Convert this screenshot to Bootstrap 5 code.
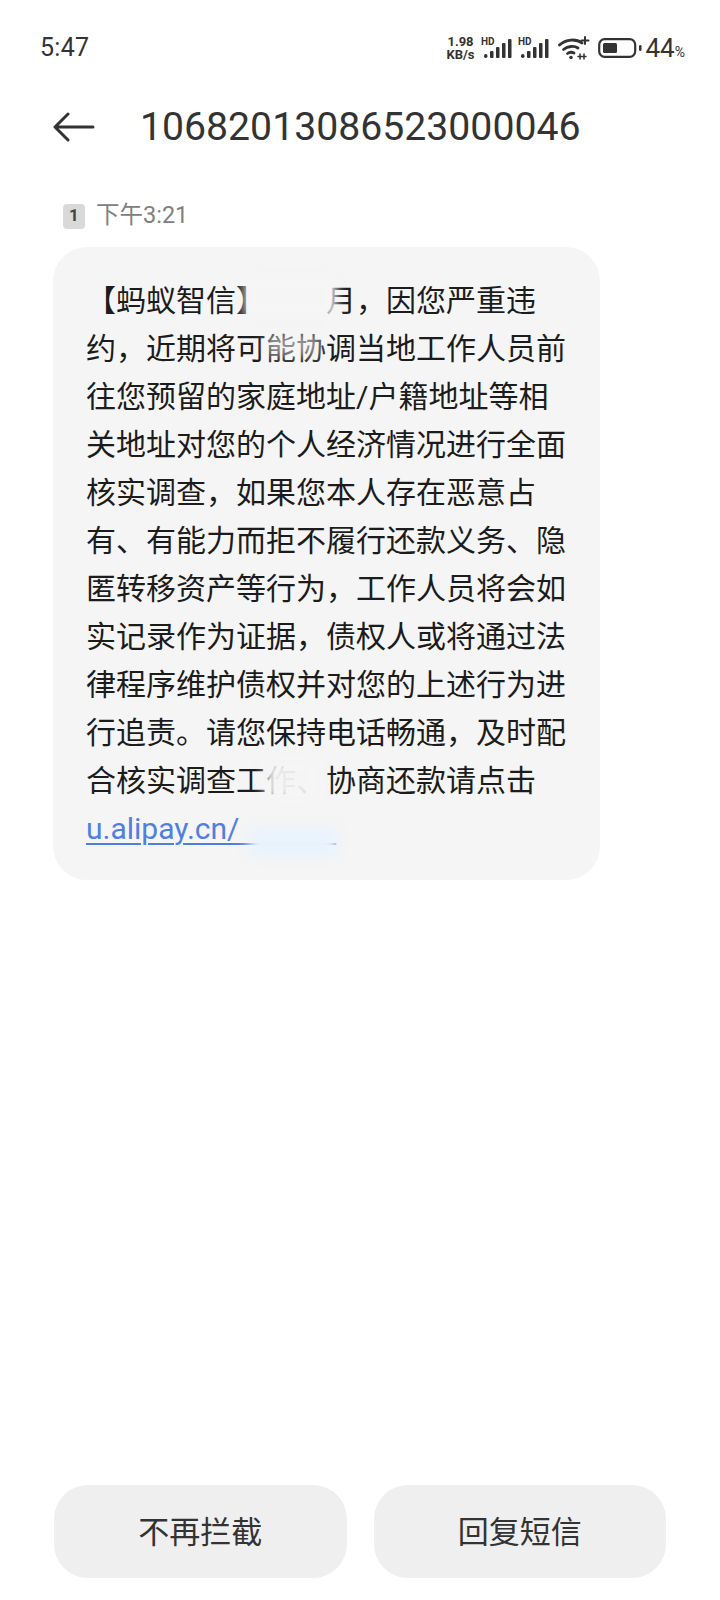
<!DOCTYPE html>
<html lang="zh-CN">
<head>
    <meta charset="UTF-8">
    <meta name="viewport" content="width=device-width, initial-scale=1.0">
    <title>短信</title>
    <link href="https://cdn.jsdelivr.net/npm/bootstrap@5.3.2/dist/css/bootstrap.min.css" rel="stylesheet">
    <style>
        body {
            background-color: #fff;
            font-family: Roboto, "Noto Sans CJK SC", sans-serif;
            color: #222;
        }
        .screen {
            width: 720px;
            height: 1600px;
            overflow: hidden;
        }
        .status-row {
            height: 96px;
            padding: 0 35px 0 40px;
            color: #333;
        }
        .clock {
            font-size: 25px;
            letter-spacing: .3px;
        }
        .speed {
            font-size: 13px;
            line-height: 13px;
            font-weight: 700;
            text-align: center;
            width: 34px;
            margin-right: 2px;
        }
        .pct {
            font-size: 26px;
            margin-left: 4px;
        }
        .pct-sign {
            font-size: 14px;
        }
        .title-row {
            height: 62px;
            padding-left: 53px;
        }
        .title-num {
            font-size: 39.2px;
            color: #333;
            margin-left: 45px;
        }
        .stamp-row {
            margin: 42px 0 0 63px;
            height: 32px;
            color: #808080;
            font-size: 23.5px;
        }
        .sim-tag {
            width: 22px;
            height: 25px;
            border-radius: 4px;
            background: #d9d9d9;
            color: #444;
            font-size: 17px;
            font-weight: 700;
            margin-right: 11px;
        }
        .bubble {
            position: relative;
            width: 547px;
            height: 633px;
            margin: 15px 0 0 53px;
            padding: 30px 32px 0 33px;
            background: #f5f5f5;
            border-radius: 34px;
            font-size: 30px;
            line-height: 48px;
            color: #1c1c1c;
        }
        .bubble a {
            color: #4f80e0;
            display: block;
            text-decoration: underline;
            text-underline-offset: 4px;
            text-decoration-thickness: 2px;
        }
        .redacted-gap {
            display: inline-block;
            width: 60px;
        }
        .smudge {
            position: absolute;
            background: #f5f5f5;
            filter: blur(6px);
        }
        .smudge-blue {
            background: #e9f3fd;
        }
        .action-row {
            margin-top: auto;
            padding: 0 54px 22px;
            gap: 27px;
        }
        .action-btn {
            flex: 1 1 0;
            height: 93px;
            padding-top: 10px;
            border: 0;
            border-radius: 34px;
            background: #efefef;
            color: #333;
            font-size: 31px;
        }
        .action-btn:hover, .action-btn:active {
            background: #efefef !important;
            color: #333 !important;
        }
    </style>
</head>
<body>
    <div class="screen d-flex flex-column">
        <div class="status-row d-flex align-items-center justify-content-between">
            <span class="clock">5:47</span>
            <div class="d-flex align-items-center">
                <div class="speed">1.98<br>KB/s</div>
                <svg width="33" height="24" viewBox="0 0 33 24" fill="#333">
                    <rect x="4" y="18" width="3.500" height="4" rx="1.700"/><rect x="10" y="15" width="3.500" height="7" rx="1"/><rect x="16" y="11" width="3.500" height="11" rx="1"/><rect x="22" y="7" width="3.500" height="15" rx="1"/><rect x="28" y="3" width="3.500" height="19" rx="1"/>
                    <text x="1" y="9" font-size="10" font-weight="700" font-family="Roboto">HD</text>
                </svg>
                <svg class="ms-1" width="33" height="24" viewBox="0 0 33 24" fill="#333">
                    <rect x="4" y="18" width="3.500" height="4" rx="1.700"/><rect x="10" y="15" width="3.500" height="7" rx="1"/><rect x="16" y="11" width="3.500" height="11" rx="1"/><rect x="22" y="7" width="3.500" height="15" rx="1"/><rect x="28" y="3" width="3.500" height="19" rx="1"/>
                    <text x="1" y="9" font-size="10" font-weight="700" font-family="Roboto">HD</text>
                </svg>
                <svg class="ms-2" width="32" height="24" viewBox="0 0 32 24" fill="none" stroke="#333" stroke-width="2.800" stroke-linecap="round">
                    <path d="M1.500 9C8 3 18 2.500 24 7"/><path d="M5.500 13.500C10 10 16 9.500 20 12"/><path d="M9.500 17.500C11.500 16 14 16 16 17"/>
                    <circle cx="13" cy="21.500" r="1.800" fill="#333" stroke="none"/>
                    <path d="M27 1v7M23.500 4.500h7" stroke-width="2"/>
                    <path d="M22 18v5M26 18v5M20 20.500h8" stroke-width="1.500"/>
                </svg>
                <svg class="ms-2" width="44" height="22" viewBox="0 0 44 22">
                    <rect x="1.200" y="2.200" width="36" height="17.600" rx="5.500" fill="none" stroke="#333" stroke-width="2.200"/>
                    <rect x="5" y="6" width="14" height="10" rx="1.500" fill="#333"/>
                    <rect x="41" y="8" width="2.500" height="6" rx="1.200" fill="#333"/>
                </svg>
                <span class="pct">44<span class="pct-sign">%</span></span>
            </div>
        </div>

        <div class="title-row d-flex align-items-center">
            <svg width="42" height="30" viewBox="0 0 42 30" fill="none" stroke="#333" stroke-width="3" stroke-linecap="round" stroke-linejoin="round">
                <path d="M40 15H3M15 2L2 15l13 13"/>
            </svg>
            <span class="title-num">10682013086523000046</span>
        </div>

        <div class="stamp-row d-flex align-items-center">
            <span class="sim-tag d-flex align-items-center justify-content-center">1</span>
            <span>下午3:21</span>
        </div>

        <div class="bubble">
            【蚂蚁智信】<span class="redacted-gap"></span>月，因您严重违约，近期将可能协调当地工作人员前往您预留的家庭地址/户籍地址等相关地址对您的个人经济情况进行全面核实调查，如果您本人存在恶意占有、有能力而拒不履行还款义务、隐匿转移资产等行为，工作人员将会如实记录作为证据，债权人或将通过法律程序维护债权并对您的上述行为进行追责。请您保持电话畅通，及时配合核实调查工作、协商还款请点击
            <a href="#">u.alipay.cn/&nbsp;&nbsp;&nbsp;&nbsp;&nbsp;&nbsp;&nbsp;&nbsp;&nbsp;&nbsp;&nbsp;&nbsp;&nbsp;</a>
            <div class="smudge" style="left:192px;top:30px;width:91px;height:40px"></div>
            <div class="smudge" style="left:212px;top:86px;width:56px;height:24px;opacity:.55"></div>
            <div class="smudge" style="left:212px;top:512px;width:56px;height:42px;opacity:.95"></div>
            <div class="smudge smudge-blue" style="left:196px;top:580px;width:88px;height:30px"></div>
        </div>

        <div class="action-row d-flex">
            <button type="button" class="btn action-btn">不再拦截</button>
            <button type="button" class="btn action-btn">回复短信</button>
        </div>
    </div>
    <script src="https://cdn.jsdelivr.net/npm/bootstrap@5.3.2/dist/js/bootstrap.bundle.min.js"></script>
</body>
</html>
